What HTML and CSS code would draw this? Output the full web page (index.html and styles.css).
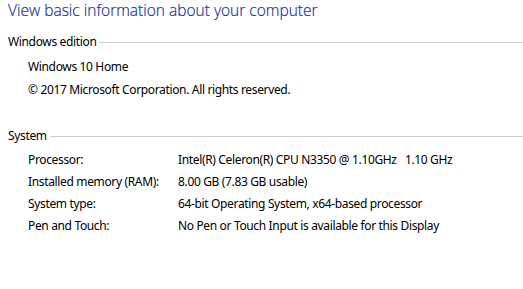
FILE: index.html
```html
<!DOCTYPE html>
<html lang="en">
<head>
    <meta charset="UTF-8">
    <title>System</title>
    <link rel="stylesheet" href="styles.css">
</head>
<body>
    <div class="page">
        <h1 class="title">View basic information about your computer</h1>

        <div class="group">
            <div class="group-head">
                <span class="group-name">Windows edition</span>
                <span class="group-rule"></span>
            </div>
            <div class="lines">
                <div class="line">Windows 10 Home</div>
                <div class="line">© 2017 Microsoft Corporation. All rights reserved.</div>
            </div>
        </div>

        <div class="group system">
            <div class="group-head">
                <span class="group-name">System</span>
                <span class="group-rule"></span>
            </div>
            <div class="table">
                <div class="label">Processor:</div>
                <div class="value">Intel(R) Celeron(R) CPU N3350 @ 1.10GHz &nbsp; 1.10 GHz</div>
                <div class="label">Installed memory (RAM):</div>
                <div class="value">8.00 GB (7.83 GB usable)</div>
                <div class="label">System type:</div>
                <div class="value">64-bit Operating System, x64-based processor</div>
                <div class="label">Pen and Touch:</div>
                <div class="value">No Pen or Touch Input is available for this Display</div>
            </div>
        </div>
    </div>
</body>
</html>
```

FILE: styles.css
```css
body {
    margin: 0;
    background: #fff;
    font-family: "Noto Sans", "Open Sans", sans-serif;
    font-size: 12px;
    letter-spacing: -0.35px;
    color: #000;
}
.page {
    padding: 0 0 0 8px;
}
.title {
    margin: 0;
    font-family: "Open Sans", sans-serif;
    font-weight: 300;
    font-size: 15.5px;
    letter-spacing: 0;
    line-height: 20px;
    color: #1a3294;
    -webkit-text-stroke: 0.2px #1a3294;
}
.group {
    margin-top: 13px;
}
.group.system {
    margin-top: 26px;
}
.group-head {
    display: flex;
    align-items: center;
    height: 16px;
}
.group-name {
    padding-right: 3px;
}
.group-rule {
    flex: 1;
    border-top: 1px solid #cfcfcf;
    margin-top: 3px;
}
.lines {
    padding: 6px 0 0 20px;
}
.line {
    line-height: 23px;
}
.table {
    display: grid;
    grid-template-columns: 150px auto;
    padding: 6px 0 0 20px;
    line-height: 22px;
}
```
